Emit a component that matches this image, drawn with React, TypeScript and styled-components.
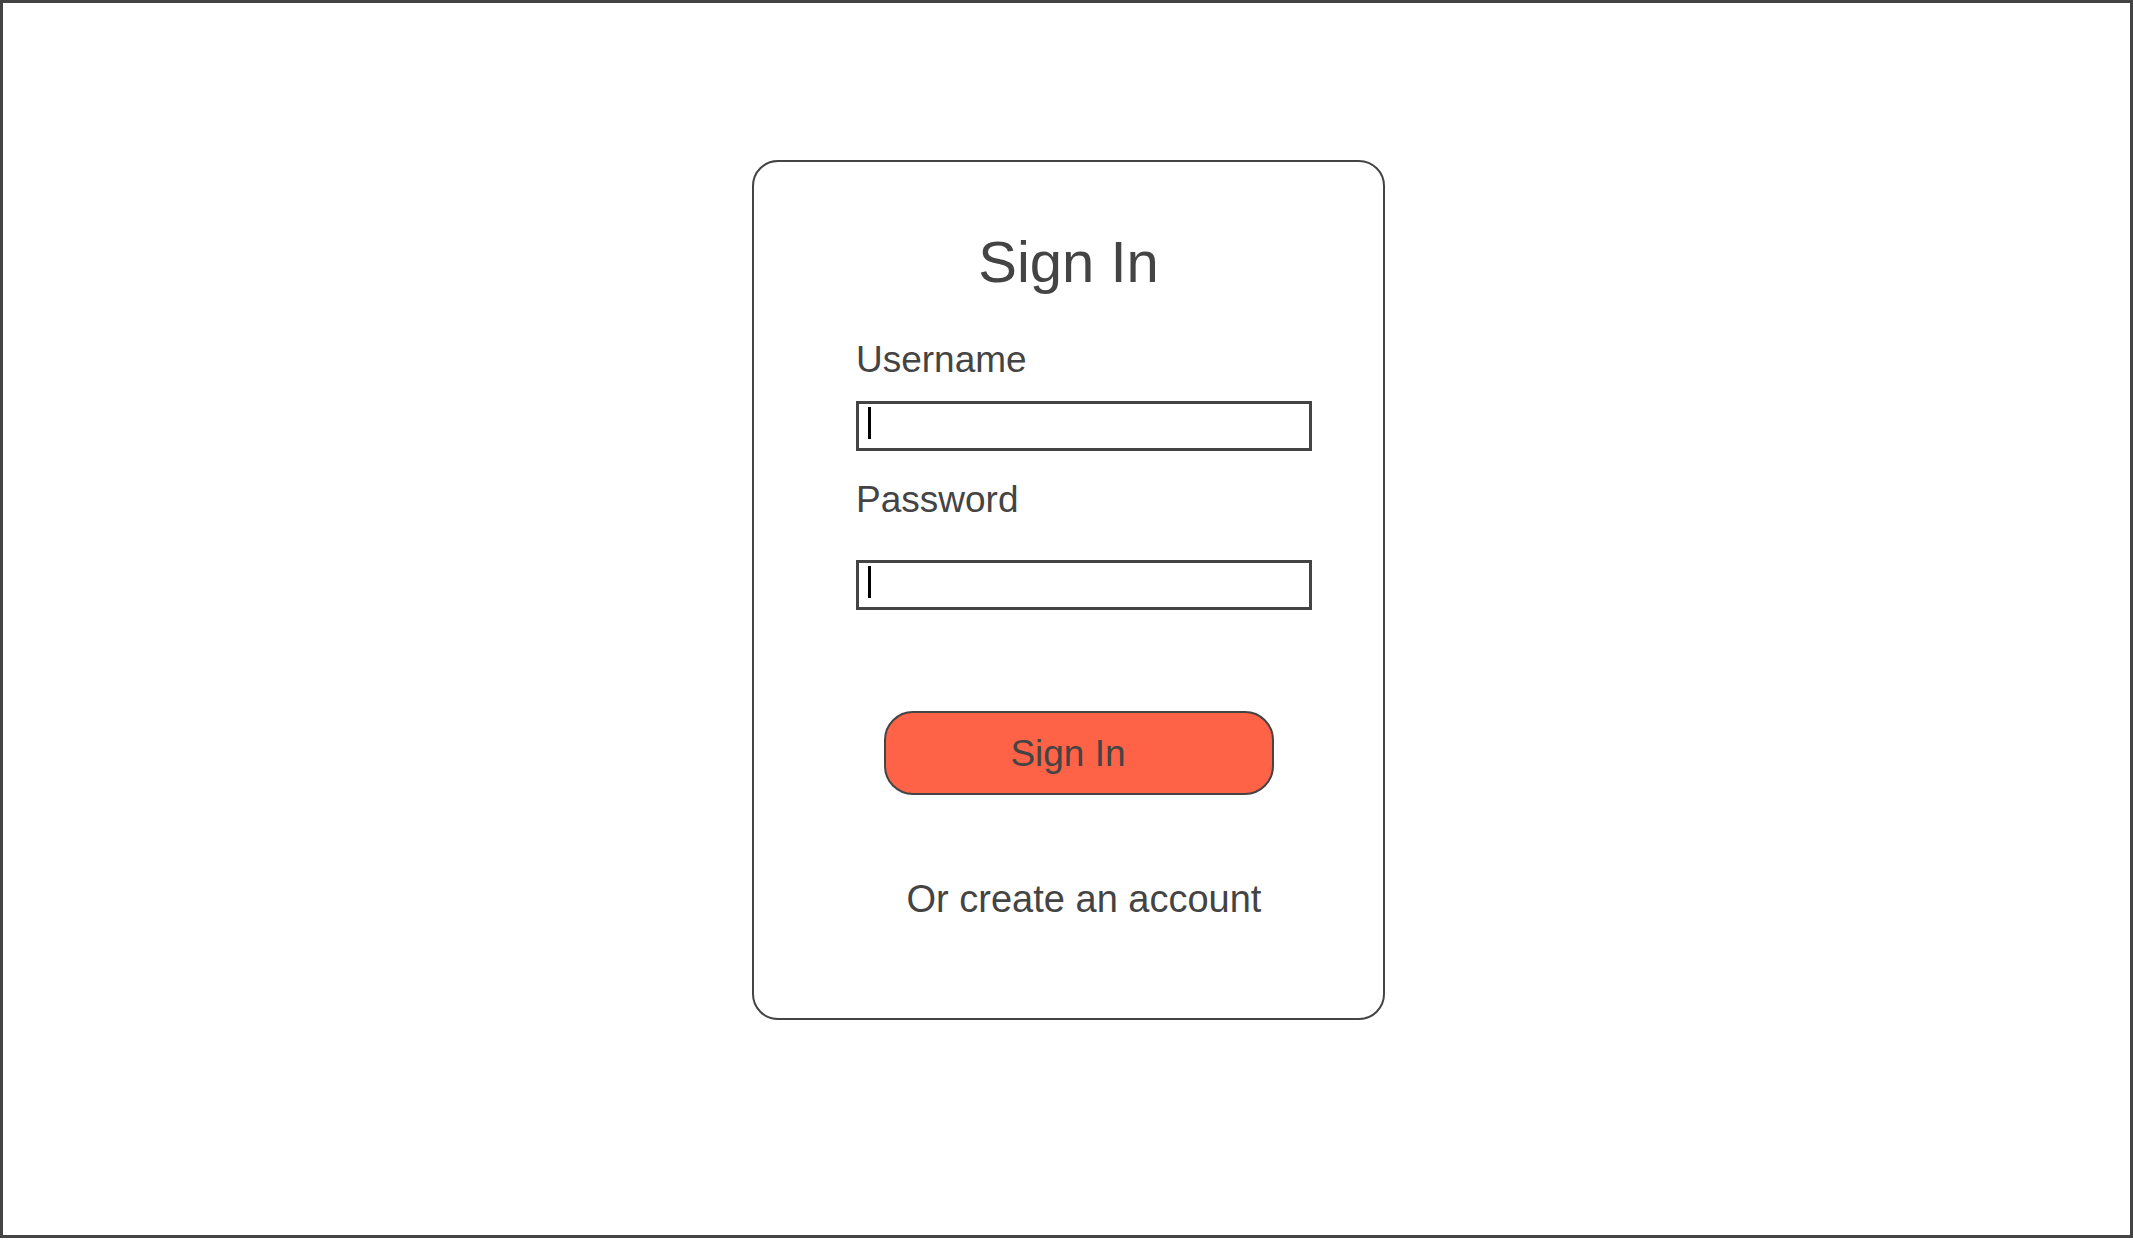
import styled, { createGlobalStyle } from "styled-components";

const GlobalStyle = createGlobalStyle`
  html, body {
    margin: 0;
    padding: 0;
    background: #ffffff;
  }
  body {
    font-family: "Liberation Sans", Arial, sans-serif;
    color: #444444;
  }
`;

const fields = [
  { label: "Username", labelGap: 23, topGap: 50 },
  { label: "Password", labelGap: 42, topGap: 30 },
];

const App = () => {
  return (
    <>
      <GlobalStyle />
      <Frame>
        <Card>
          <Title>Sign In</Title>
          <Form>
            {fields.map((field) => (
              <FieldWrapper key={field.label} $top={field.topGap}>
                <Label $gap={field.labelGap}>{field.label}</Label>
                <InputBox>
                  <Caret />
                </InputBox>
              </FieldWrapper>
            ))}
          </Form>
          <SignInButton type="button">Sign In</SignInButton>
          <CreateLink>Or create an account</CreateLink>
        </Card>
      </Frame>
    </>
  );
};

const Frame = styled.div`
  box-sizing: border-box;
  width: 2133px;
  height: 1238px;
  border: 3px solid #444444;
  display: flex;
  justify-content: center;
  align-items: flex-start;
  padding: 157px 0 0 4px;
`;

const Card = styled.div`
  box-sizing: border-box;
  width: 633px;
  height: 860px;
  border: 2px solid #444444;
  border-radius: 26px;
  display: flex;
  flex-direction: column;
  padding-top: 71px;
`;

const Title = styled.h1`
  margin: 0;
  font-size: 58px;
  line-height: 58px;
  font-weight: 400;
  text-align: center;
  color: #444444;
`;

const Form = styled.div`
  display: flex;
  flex-direction: column;
  padding-left: 102px;
`;

const FieldWrapper = styled.div<{ $top: number }>`
  display: flex;
  flex-direction: column;
  margin-top: ${({ $top }) => $top}px;
`;

const Label = styled.label<{ $gap: number }>`
  font-size: 37px;
  line-height: 37px;
  color: #444444;
  margin-bottom: ${({ $gap }) => $gap}px;
`;

const InputBox = styled.div`
  box-sizing: border-box;
  width: 456px;
  height: 50px;
  border: 3px solid #444444;
  background: #ffffff;
  padding: 3px 0 0 9px;
`;

const Caret = styled.span`
  display: block;
  width: 3px;
  height: 32px;
  background: #000000;
`;

const SignInButton = styled.button`
  box-sizing: border-box;
  width: 390px;
  height: 84px;
  margin: 101px 0 0 130px;
  padding: 0 22px 0 0;
  border: 2px solid #444444;
  border-radius: 29px;
  background: #ff6347;
  font-family: "Liberation Sans", Arial, sans-serif;
  font-size: 37px;
  line-height: 37px;
  color: #444444;
  cursor: pointer;
`;

const CreateLink = styled.p`
  margin: 85px 0 0 0;
  padding-left: 31px;
  font-size: 38px;
  line-height: 38px;
  text-align: center;
  color: #444444;
  cursor: pointer;
`;

export default App;
